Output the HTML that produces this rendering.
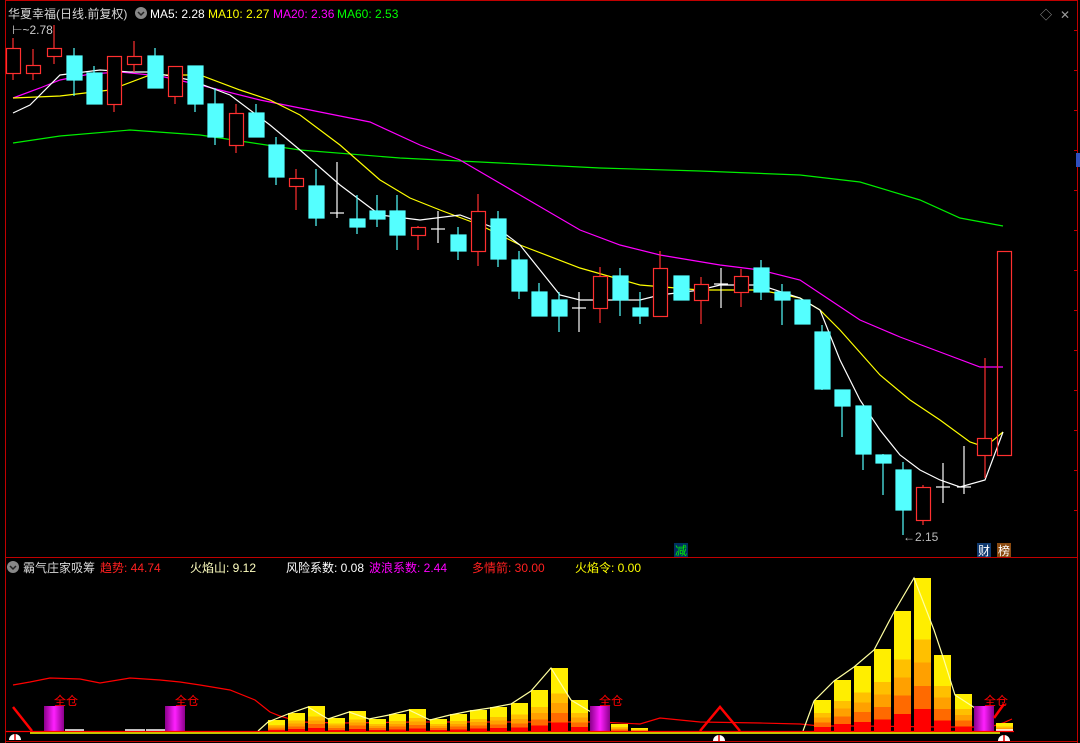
<!DOCTYPE html>
<html><head><meta charset="utf-8"><style>
html,body{margin:0;padding:0;background:#000;width:1080px;height:743px;overflow:hidden}
svg{display:block}
text{font-family:"Liberation Sans","Noto Sans CJK SC",sans-serif;font-size:12px}
</style></head><body>
<svg width="1080" height="743" viewBox="0 0 1080 743" xmlns="http://www.w3.org/2000/svg">
<defs>
<linearGradient id="fl" x1="0" y1="0" x2="0" y2="1">
<stop offset="0" stop-color="#ffee00"/><stop offset="0.4" stop-color="#ffee00"/>
<stop offset="0.4" stop-color="#ffc000"/><stop offset="0.55" stop-color="#ffc000"/>
<stop offset="0.55" stop-color="#ffa000"/><stop offset="0.7" stop-color="#ffa000"/>
<stop offset="0.7" stop-color="#ff6a00"/><stop offset="0.85" stop-color="#ff6a00"/>
<stop offset="0.85" stop-color="#ff0000"/><stop offset="1" stop-color="#ff0000"/>
</linearGradient>
<linearGradient id="cy" x1="0" y1="0" x2="1" y2="0">
<stop offset="0" stop-color="#8a008a"/><stop offset="0.5" stop-color="#ff20ff"/><stop offset="1" stop-color="#8a008a"/>
</linearGradient>
</defs>
<!-- frame -->
<g stroke="#c00000" stroke-width="1" fill="none">
<line x1="5.5" y1="0" x2="5.5" y2="743"/>
<line x1="1077.5" y1="0" x2="1077.5" y2="743"/>
<line x1="5" y1="557.5" x2="1078" y2="557.5"/>
<line x1="5" y1="741.5" x2="1078" y2="741.5"/>
<line x1="5" y1="0.5" x2="1078" y2="0.5"/>
</g>
<g stroke="#c00000"><line x1="1074" y1="30.5" x2="1077" y2="30.5"/><line x1="1074" y1="70.5" x2="1077" y2="70.5"/><line x1="1074" y1="110.5" x2="1077" y2="110.5"/><line x1="1074" y1="150.5" x2="1077" y2="150.5"/><line x1="1074" y1="190.5" x2="1077" y2="190.5"/><line x1="1074" y1="230.5" x2="1077" y2="230.5"/><line x1="1074" y1="270.5" x2="1077" y2="270.5"/><line x1="1074" y1="310.5" x2="1077" y2="310.5"/><line x1="1074" y1="350.5" x2="1077" y2="350.5"/><line x1="1074" y1="390.5" x2="1077" y2="390.5"/><line x1="1074" y1="430.5" x2="1077" y2="430.5"/><line x1="1074" y1="470.5" x2="1077" y2="470.5"/><line x1="1074" y1="510.5" x2="1077" y2="510.5"/></g>
<rect x="1076" y="153" width="4" height="14" fill="#3050c0"/>
<!-- header -->
<text x="8" y="18" fill="#d8d8d8" font-size="13">华夏幸福(日线.前复权)</text>
<circle cx="141" cy="13" r="6" fill="#888"/><path d="M138 12l3 3 3-3" stroke="#222" stroke-width="1.5" fill="none"/>
<text x="150" y="18" fill="#fff">MA5: 2.28</text>
<text x="208" y="18" fill="#ffff00">MA10: 2.27</text>
<text x="273" y="18" fill="#ff00ff">MA20: 2.36</text>
<text x="337" y="18" fill="#00ff00">MA60: 2.53</text>
<text x="1040" y="19" fill="#999" font-size="11">◇</text><text x="1060" y="19" fill="#999" font-size="11">✕</text>
<text x="12" y="34" fill="#ccc" font-size="12">⊢~2.78</text>
<!-- MA lines -->
<g fill="none" stroke-width="1.2">
<polyline stroke="#00ee00" points="13,143 60,136 130,130 200,135 300,150 400,158 500,163 600,168 700,171 800,175 860,182 920,200 960,218 1003,226"/>
<polyline stroke="#ff00ff" points="13,98 40,88 60,80 90,74 120,72 160,76 200,85 260,100 320,112 370,122 420,145 460,160 520,195 580,230 620,245 660,255 720,265 760,270 800,280 830,300 860,320 900,337 940,352 980,367 1003,367"/>
<polyline stroke="#ffff00" points="13,98 60,96 110,90 150,75 200,75 240,90 270,100 300,115 340,145 380,180 410,198 440,210 480,225 520,245 580,268 640,285 700,290 760,290 800,298 820,310 840,330 880,375 910,400 940,420 970,442 985,447 1003,432"/>
<polyline stroke="#ffffff" points="13,113 30,105 60,75 100,70 130,72 150,72 190,80 230,95 270,125 300,150 340,185 380,215 420,220 460,215 500,230 520,245 540,270 560,295 580,300 620,300 640,300 660,295 700,290 720,285 760,285 800,298 820,310 840,360 860,400 880,430 900,455 920,470 940,480 960,487 985,480 1003,432"/>
</g>
<!-- candles -->
<g stroke-width="1.2">
<!-- red hollow -->
<g stroke="#ff3030" fill="none">
<line x1="13" y1="38" x2="13" y2="80"/><rect x="6.5" y="48.5" width="14" height="25" fill="#000"/>
<line x1="33" y1="49" x2="33" y2="80"/><rect x="26.5" y="65.5" width="14" height="8" fill="#000"/>
<line x1="54" y1="25" x2="54" y2="64"/><rect x="47.5" y="48.5" width="14" height="8" fill="#000"/>
<line x1="114" y1="56" x2="114" y2="112"/><rect x="107.5" y="56.5" width="14" height="48" fill="#000"/>
<line x1="134" y1="41" x2="134" y2="72"/><rect x="127.5" y="56.5" width="14" height="8" fill="#000"/>
<line x1="175" y1="66" x2="175" y2="104"/><rect x="168.5" y="66.5" width="14" height="30" fill="#000"/>
<line x1="236" y1="104" x2="236" y2="153"/><rect x="229.5" y="113.5" width="14" height="32" fill="#000"/>
<line x1="296" y1="169" x2="296" y2="210"/><rect x="289.5" y="178.5" width="14" height="8" fill="#000"/>
<line x1="418" y1="226" x2="418" y2="250"/><rect x="411.5" y="227.5" width="14" height="8" fill="#000"/>
<line x1="478" y1="194" x2="478" y2="266"/><rect x="471.5" y="211.5" width="14" height="40" fill="#000"/>
<line x1="600" y1="267" x2="600" y2="323"/><rect x="593.5" y="276.5" width="14" height="32" fill="#000"/>
<line x1="660" y1="251" x2="660" y2="316"/><rect x="653.5" y="268.5" width="14" height="48" fill="#000"/>
<line x1="701" y1="277" x2="701" y2="324"/><rect x="694.5" y="284.5" width="14" height="16" fill="#000"/>
<line x1="741" y1="269" x2="741" y2="307"/><rect x="734.5" y="276.5" width="14" height="16" fill="#000"/>
<line x1="923" y1="485" x2="923" y2="525"/><rect x="916.5" y="487.5" width="14" height="33" fill="#000"/>
<line x1="985" y1="358" x2="985" y2="478"/><rect x="977.5" y="438.5" width="14" height="17" fill="#000"/>
<rect x="997.5" y="251.5" width="14" height="204"/>
</g>
<!-- cyan -->
<g stroke="#54ffff" fill="#54ffff">
<line x1="74" y1="48" x2="74" y2="96"/><rect x="67" y="56" width="15" height="24"/>
<line x1="94" y1="66" x2="94" y2="104"/><rect x="87" y="73" width="15" height="31"/>
<line x1="155" y1="48" x2="155" y2="88"/><rect x="148" y="56" width="15" height="32"/>
<line x1="195" y1="66" x2="195" y2="112"/><rect x="188" y="66" width="15" height="38"/>
<line x1="215" y1="88" x2="215" y2="145"/><rect x="208" y="104" width="15" height="33"/>
<line x1="256" y1="104" x2="256" y2="137"/><rect x="249" y="113" width="15" height="24"/>
<line x1="276" y1="137" x2="276" y2="185"/><rect x="269" y="145" width="15" height="32"/>
<line x1="316" y1="169" x2="316" y2="226"/><rect x="309" y="186" width="15" height="32"/>
<line x1="357" y1="195" x2="357" y2="234"/><rect x="350" y="219" width="15" height="8"/>
<line x1="377" y1="195" x2="377" y2="227"/><rect x="370" y="211" width="15" height="8"/>
<line x1="397" y1="195" x2="397" y2="250"/><rect x="390" y="211" width="15" height="24"/>
<line x1="458" y1="227" x2="458" y2="260"/><rect x="451" y="235" width="15" height="16"/>
<line x1="498" y1="211" x2="498" y2="267"/><rect x="491" y="219" width="15" height="40"/>
<line x1="519" y1="251" x2="519" y2="299"/><rect x="512" y="260" width="15" height="31"/>
<line x1="539" y1="283" x2="539" y2="316"/><rect x="532" y="292" width="15" height="24"/>
<line x1="559" y1="292" x2="559" y2="332"/><rect x="552" y="300" width="15" height="16"/>
<line x1="620" y1="268" x2="620" y2="316"/><rect x="613" y="276" width="15" height="24"/>
<line x1="640" y1="292" x2="640" y2="324"/><rect x="633" y="308" width="15" height="8"/>
<line x1="681" y1="276" x2="681" y2="300"/><rect x="674" y="276" width="15" height="24"/>
<line x1="761" y1="260" x2="761" y2="300"/><rect x="754" y="268" width="15" height="24"/>
<line x1="782" y1="284" x2="782" y2="325"/><rect x="775" y="292" width="15" height="8"/>
<rect x="795" y="300" width="15" height="24"/>
<line x1="822" y1="325" x2="822" y2="390"/><rect x="815" y="332" width="15" height="57"/>
<line x1="842" y1="390" x2="842" y2="437"/><rect x="835" y="390" width="15" height="16"/>
<line x1="863" y1="406" x2="863" y2="470"/><rect x="856" y="406" width="15" height="48"/>
<line x1="883" y1="454" x2="883" y2="495"/><rect x="876" y="455" width="15" height="8"/>
<line x1="903" y1="462" x2="903" y2="535"/><rect x="896" y="470" width="15" height="40"/>
</g>
<!-- doji white -->
<g stroke="#ffffff">
<line x1="337" y1="162" x2="337" y2="218"/><line x1="330" y1="213" x2="344" y2="213"/>
<line x1="438" y1="211" x2="438" y2="243"/><line x1="431" y1="229" x2="445" y2="229"/>
<line x1="579" y1="292" x2="579" y2="332"/><line x1="572" y1="308" x2="586" y2="308"/>
<line x1="721" y1="268" x2="721" y2="308"/><line x1="714" y1="284" x2="728" y2="284"/>
<line x1="943" y1="463" x2="943" y2="503"/><line x1="936" y1="487" x2="950" y2="487"/>
<line x1="964" y1="446" x2="964" y2="494"/><line x1="957" y1="487" x2="971" y2="487"/>
</g>
</g>
<text x="903" y="541" fill="#bbb" font-size="12">←2.15</text>
<rect x="674" y="543" width="14" height="14" fill="#003060"/><text x="675" y="555" fill="#00ee00" font-size="12">减</text>
<rect x="977" y="543" width="14" height="14" fill="#103a70"/><text x="978" y="555" fill="#fff" font-size="12">财</text>
<rect x="997" y="543" width="14" height="14" fill="#8a4a10"/><text x="998" y="555" fill="#fff" font-size="12">榜</text>
<!-- bottom header -->
<circle cx="13" cy="567" r="6" fill="#888"/><path d="M10 566l3 3 3-3" stroke="#222" stroke-width="1.5" fill="none"/>
<text x="23" y="572" fill="#d8d8d8">霸气庄家吸筹</text>
<text x="100" y="572" fill="#ff2020">趋势: 44.74</text>
<text x="190" y="572" fill="#ffffc0">火焰山: 9.12</text>
<text x="286" y="572" fill="#fff">风险系数: 0.08</text>
<text x="369" y="572" fill="#ff00ff">波浪系数: 2.44</text>
<text x="472" y="572" fill="#ff2020">多情箭: 30.00</text>
<text x="575" y="572" fill="#ffff00">火焰令: 0.00</text>
<!-- red trend line -->
<polyline fill="none" stroke="#ff0000" stroke-width="1.2" points="13,685 30,682 50,678 80,679 100,683 130,678 160,680 180,682 200,685 230,690 255,700 270,712 280,716 300,722 340,723 420,722 560,722 600,722 640,724 660,718 700,722 760,723 800,724 820,726 860,726 940,727 990,727 1003,723 1012,719"/>
<!-- flame bars -->
<g fill="url(#fl)">
<rect x="268" y="720" width="17" height="12"/>
<rect x="288" y="713" width="17" height="19"/>
<rect x="308" y="706" width="17" height="26"/>
<rect x="328" y="718" width="17" height="14"/>
<rect x="349" y="711" width="17" height="21"/>
<rect x="369" y="719" width="17" height="13"/>
<rect x="389" y="714" width="17" height="18"/>
<rect x="409" y="709" width="17" height="23"/>
<rect x="430" y="719" width="17" height="13"/>
<rect x="450" y="714" width="17" height="18"/>
<rect x="470" y="710" width="17" height="22"/>
<rect x="490" y="707" width="17" height="25"/>
<rect x="511" y="703" width="17" height="29"/>
<rect x="531" y="690" width="17" height="42"/>
<rect x="551" y="668" width="17" height="64"/>
<rect x="571" y="700" width="17" height="32"/>
<rect x="611" y="724" width="17" height="8"/>
<rect x="631" y="728" width="17" height="4"/>
<rect x="814" y="700" width="17" height="32"/>
<rect x="834" y="680" width="17" height="52"/>
<rect x="854" y="666" width="17" height="66"/>
<rect x="874" y="649" width="17" height="83"/>
<rect x="894" y="611" width="17" height="121"/>
<rect x="914" y="578" width="17" height="154"/>
<rect x="934" y="655" width="17" height="77"/>
<rect x="955" y="694" width="17" height="38"/>
<rect x="996" y="723" width="17" height="9"/>
</g>
<polyline fill="none" stroke="#ffffa0" stroke-width="1.2" points="258,731 268,722 288,714 308,707 328,719 349,712 369,719 389,715 409,710 430,720 450,715 470,711 490,708 511,704 531,691 551,668 571,700 591,712"/>
<polyline fill="none" stroke="#ffffa0" stroke-width="1.2" points="803,731 814,701 834,681 854,667 874,650 894,612 914,578 934,630 944,660 955,695 975,708"/>
<!-- magenta cylinders -->
<g fill="url(#cy)">
<rect x="44" y="706" width="20" height="26"/><rect x="165" y="706" width="20" height="26"/>
<rect x="590" y="706" width="20" height="26"/><rect x="974" y="706" width="20" height="26"/>
</g>
<g fill="#ff0000" font-size="12"><text x="54" y="705">全仓</text><text x="175" y="705">全仓</text><text x="599" y="705">全仓</text><text x="984" y="705">全仓</text></g>
<!-- red strokes -->
<g stroke="#ff0000" stroke-width="2.5" fill="none">
<line x1="13" y1="707" x2="32" y2="731"/>
<polyline points="700,731 720,707 740,731"/>
<line x1="994" y1="718" x2="1004" y2="704"/>
</g>
<!-- baseline -->
<line x1="6" y1="731.5" x2="1014" y2="731.5" stroke="#ff0000" stroke-width="1.2"/>
<line x1="30" y1="733" x2="1000" y2="733" stroke="#ffff00" stroke-width="1.5"/>
<g stroke="#ffffff" stroke-width="1.5"><line x1="65" y1="730" x2="84" y2="730"/><line x1="125" y1="730" x2="145" y2="730"/><line x1="146" y1="730" x2="165" y2="730"/><line x1="996" y1="730" x2="1013" y2="730"/></g>
<g><path d="M9 740a6 6 0 0 1 12 0z" fill="#fff"/><line x1="15" y1="734" x2="15" y2="740" stroke="#d00" stroke-width="1.5"/>
<path d="M713 741a6 6 0 0 1 12 0z" fill="#fff"/><line x1="719" y1="735" x2="719" y2="741" stroke="#d00" stroke-width="1.5"/>
<path d="M998 741a6 6 0 0 1 12 0z" fill="#fff"/><line x1="1004" y1="735" x2="1004" y2="741" stroke="#d00" stroke-width="1.5"/></g>
</svg>
</body></html>
